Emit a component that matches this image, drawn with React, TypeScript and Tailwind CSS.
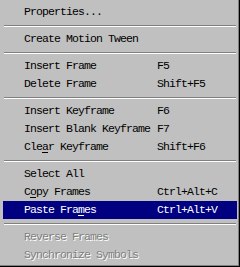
import React from 'react';

type Item =
    | { kind: 'sep' }
    | { kind: 'item'; label: React.ReactNode; shortcut?: string; active?: boolean; disabled?: boolean };

const U = ({ children }: { children: React.ReactNode }) => <span className="underline underline-offset-2">{children}</span>;

const items: Item[] = [
    { kind: 'item', label: 'Properties...' },
    { kind: 'sep' },
    { kind: 'item', label: 'Create Motion Tween' },
    { kind: 'sep' },
    { kind: 'item', label: 'Insert Frame', shortcut: 'F5' },
    { kind: 'item', label: 'Delete Frame', shortcut: 'Shift+F5' },
    { kind: 'sep' },
    { kind: 'item', label: 'Insert Keyframe', shortcut: 'F6' },
    { kind: 'item', label: 'Insert Blank Keyframe', shortcut: 'F7' },
    { kind: 'item', label: <>Cle<U>a</U>r Keyframe</>, shortcut: 'Shift+F6' },
    { kind: 'sep' },
    { kind: 'item', label: 'Select All' },
    { kind: 'item', label: <>C<U>o</U>py Frames</>, shortcut: 'Ctrl+Alt+C' },
    { kind: 'item', label: <>Paste Fra<U>m</U>es</>, shortcut: 'Ctrl+Alt+V', active: true },
    { kind: 'sep' },
    { kind: 'item', label: 'Reverse Frames', disabled: true },
    { kind: 'item', label: 'Synchronize Symbols', disabled: true },
];

export default function App() {
    return (
        <div className="w-[240px] h-[267px] bg-[#c0c0c0] border-r border-b border-black">
            <div className="h-full border-r border-b border-[#808080] pl-[3px] pt-[3px] pr-[1px] pb-[1px] flex flex-col font-['Liberation_Mono',monospace] text-[11.5px] tracking-[-0.9px] text-black">
                {items.map((it, i) =>
                    it.kind === 'sep' ? (
                        <div key={i} className="h-[9px] flex flex-col justify-center px-[1px]">
                            <div className="h-px bg-[#808080]" />
                            <div className="h-px bg-white" />
                        </div>
                    ) : (
                        <div
                            key={i}
                            className={
                                'h-[18px] flex items-center pl-[21px] whitespace-nowrap ' +
                                (it.active ? 'bg-[#000080] text-white' : '') +
                                (it.disabled ? ' text-[#808080] [text-shadow:1px_1px_0_#ffffff]' : '')
                            }
                        >
                            <span className="w-[133px] shrink-0">{it.label}</span>
                            {it.shortcut && <span>{it.shortcut}</span>}
                        </div>
                    )
                )}
            </div>
        </div>
    );
}
